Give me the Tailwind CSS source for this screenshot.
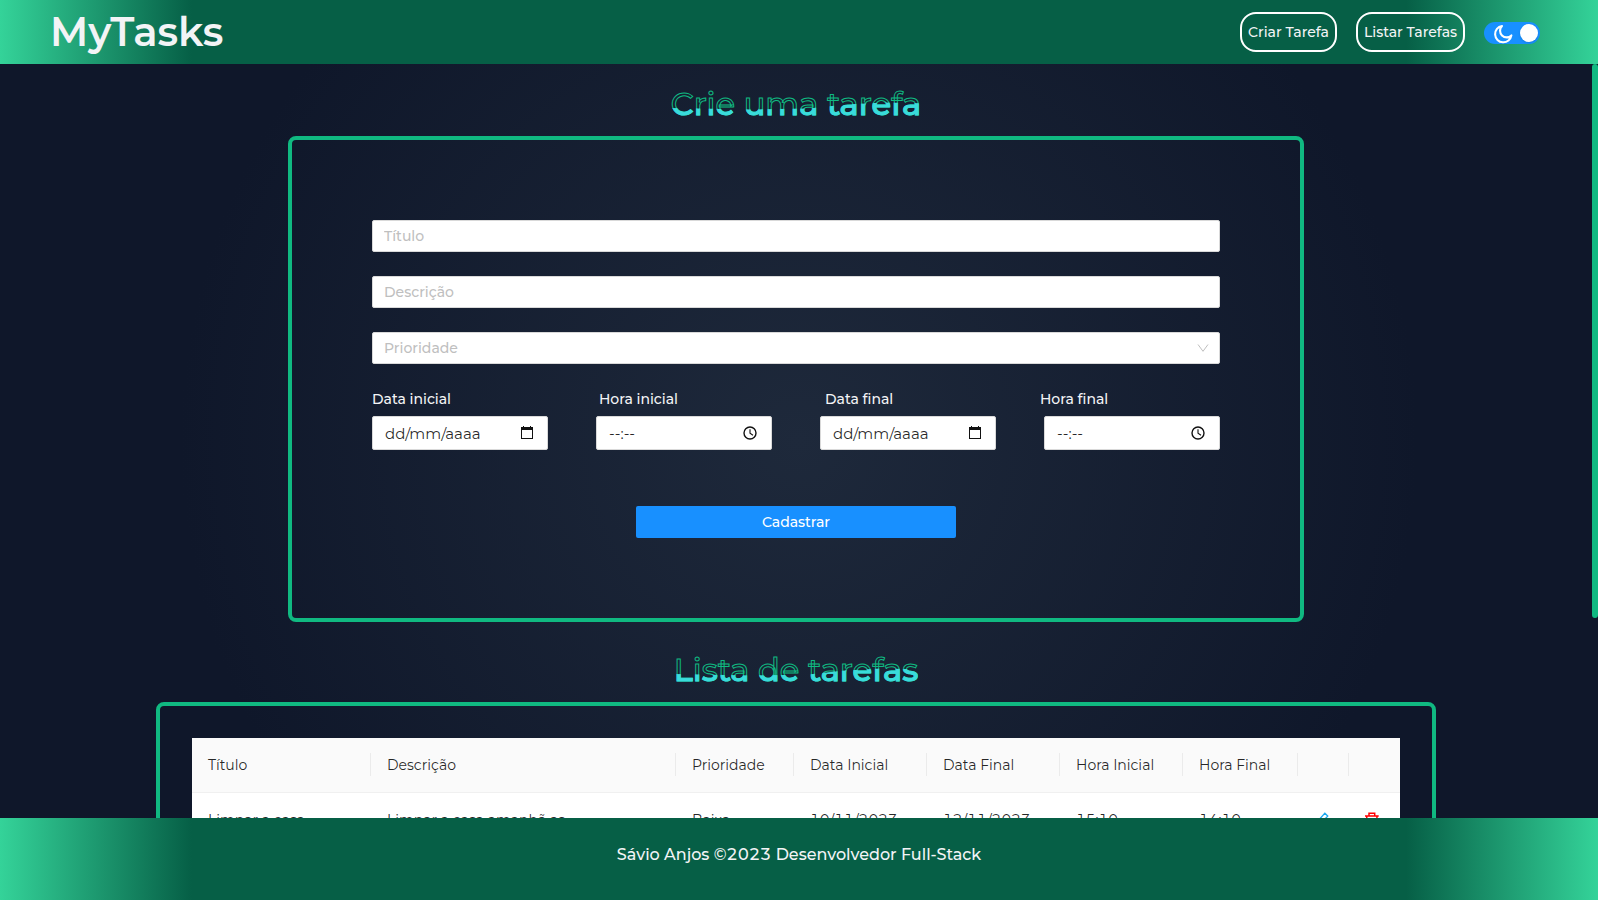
<!DOCTYPE html>
<html lang="pt-BR">
<head>
<meta charset="utf-8">
<meta name="viewport" content="width=device-width, initial-scale=1">
<title>MyTasks</title>
<script src="https://cdn.jsdelivr.net/npm/@tailwindcss/browser@4"></script>
</head>
<body class="flex h-screen flex-col overflow-hidden bg-[#0f172a] font-[Montserrat,Inter,sans-serif] text-sm tabular-nums text-black/85">
<header class="flex h-16 shrink-0 items-center justify-between bg-[linear-gradient(90deg,#34d399_0%,#065f46_12%,#065f46_88%,#34d399_100%)] pr-[58px] pl-[50px]">
  <h1 class="text-[40px] leading-none font-semibold text-gray-100">MyTasks</h1>
  <nav class="flex items-center gap-[19px]">
    <button type="button" class="h-10 w-[97px] rounded-2xl border-2 border-white font-medium whitespace-nowrap text-gray-100">Criar Tarefa</button>
    <button type="button" class="h-10 w-[109px] rounded-2xl border-2 border-white font-medium whitespace-nowrap text-gray-100">Listar Tarefas</button>
    <button type="button" role="switch" aria-checked="true" aria-label="Modo escuro" class="mt-0.5 flex h-[22px] w-14 items-center justify-between rounded-full bg-[#1890ff] pr-0.5 pl-[9px]">
      <svg class="mt-0.5 size-5" viewBox="0 0 20 20" fill="none" stroke="#fff" stroke-width="2.1" stroke-linejoin="round" aria-hidden="true"><path d="M9 2A8.2 8.2 0 1 0 18.4 11.4A5.6 5.6 0 0 1 9 2Z"/></svg>
      <span class="size-[18px] rounded-full bg-white shadow"></span>
    </button>
  </nav>
</header>

<div class="relative min-h-0 flex-1">
<main class="h-full overflow-y-auto bg-[radial-gradient(circle,#1e293b_0%,#0f172a_70%)] pt-5 pr-1.5 [scrollbar-width:none]">
  <section class="mx-auto max-w-[1016px]">
    <h2 class="relative mx-auto mb-3 w-fit text-[32px] leading-10 font-medium text-transparent [-webkit-text-stroke:1px_#10b981] before:absolute before:inset-0 before:whitespace-nowrap before:text-[#3adbdb] before:content-['Crie_uma_tarefa'] before:[-webkit-text-stroke:1px_#3adbdb] before:[clip-path:polygon(0_60%,32%_64%,55%_61%,70%_51%,85%_46%,100%_48%,100%_100%,0_100%)]">Crie uma tarefa</h2>
    <form class="rounded-lg border-4 border-[#10b981] p-20">
      <div class="flex flex-col gap-6">
        <input type="text" aria-label="Título" placeholder="Título" class="h-8 w-full rounded-xs border border-[#d9d9d9] bg-white px-[11px] font-medium placeholder:text-[#bfbfbf]">
        <input type="text" aria-label="Descrição" placeholder="Descrição" class="h-8 w-full rounded-xs border border-[#d9d9d9] bg-white px-[11px] font-medium placeholder:text-[#bfbfbf]">
        <div class="relative">
          <select aria-label="Prioridade" class="block h-8 w-full appearance-none rounded-xs border border-[#d9d9d9] bg-white px-[11px] font-medium text-[#bfbfbf]"><option>Prioridade</option><option>Baixa</option><option>Média</option><option>Alta</option></select>
          <svg class="pointer-events-none absolute top-2.5 right-[11px] size-3" viewBox="0 0 12 12" fill="none" stroke="#bfbfbf" aria-hidden="true"><path d="M1 2.5L6 9.3L11 2.5"/></svg>
        </div>
      </div>
      <div class="mt-6 grid grid-cols-[227fr_226fr_215fr_180fr] leading-[22px] font-medium text-gray-100">
        <label for="di">Data inicial</label><label for="hi">Hora inicial</label><label for="df">Data final</label><label for="hf">Hora final</label>
      </div>
      <div class="mt-1.5 grid grid-cols-4 gap-12">
        <div class="relative">
          <input id="di" type="text" value="dd/mm/aaaa" class="h-[34px] w-full rounded-xs border border-[#d9d9d9] bg-white px-3 text-[15px]">
          <svg class="absolute top-2.5 right-[15px] h-3.5 w-3" viewBox="0 0 12 14" aria-hidden="true"><path fill="#111" fill-rule="evenodd" d="M0 1h2V0h1v1h6V0h1v1h2v12H0zM1 4v8h10V4z"/></svg>
        </div>
        <div class="relative">
          <input id="hi" type="text" value="--:--" class="h-[34px] w-full rounded-xs border border-[#d9d9d9] bg-white px-3 text-[15px]">
          <svg class="absolute top-2.5 right-[15px] size-3.5" viewBox="0 0 14 14" fill="none" stroke="#111" stroke-width="1.4" aria-hidden="true"><circle cx="7" cy="7" r="6"/><path d="M7 3.2V7.3L10 9.2" stroke-width="1.1"/></svg>
        </div>
        <div class="relative">
          <input id="df" type="text" value="dd/mm/aaaa" class="h-[34px] w-full rounded-xs border border-[#d9d9d9] bg-white px-3 text-[15px]">
          <svg class="absolute top-2.5 right-[15px] h-3.5 w-3" viewBox="0 0 12 14" aria-hidden="true"><path fill="#111" fill-rule="evenodd" d="M0 1h2V0h1v1h6V0h1v1h2v12H0zM1 4v8h10V4z"/></svg>
        </div>
        <div class="relative">
          <input id="hf" type="text" value="--:--" class="h-[34px] w-full rounded-xs border border-[#d9d9d9] bg-white px-3 text-[15px]">
          <svg class="absolute top-2.5 right-[15px] size-3.5" viewBox="0 0 14 14" fill="none" stroke="#111" stroke-width="1.4" aria-hidden="true"><circle cx="7" cy="7" r="6"/><path d="M7 3.2V7.3L10 9.2" stroke-width="1.1"/></svg>
        </div>
      </div>
      <button type="submit" class="mx-auto mt-14 block h-8 w-80 rounded-xs bg-[#1890ff] font-medium text-white">Cadastrar</button>
    </form>
  </section>

  <section class="mx-auto mt-7 max-w-[1280px]">
    <h2 class="relative mx-auto mb-3 w-fit text-[32px] leading-10 font-medium text-transparent [-webkit-text-stroke:1px_#10b981] before:absolute before:inset-0 before:whitespace-nowrap before:text-[#3adbdb] before:content-['Lista_de_tarefas'] before:[-webkit-text-stroke:1px_#3adbdb] before:[clip-path:polygon(0_60%,32%_64%,55%_61%,70%_51%,85%_46%,100%_48%,100%_100%,0_100%)]">Lista de tarefas</h2>
    <div class="rounded-lg border-4 border-[#10b981] p-8">
      <table class="w-full table-fixed rounded-t-xs bg-white text-left">
        <colgroup><col class="w-[179px]"><col class="w-[305px]"><col class="w-[118px]"><col class="w-[133px]"><col class="w-[133px]"><col class="w-[123px]"><col class="w-[115px]"><col class="w-[51px]"><col class="w-[51px]"></colgroup>
        <thead class="bg-[#fafafa]">
          <tr class="h-[54px] border-b border-[#f0f0f0] [&>th]:bg-[linear-gradient(#ebebeb,#ebebeb)] [&>th]:bg-[length:1px_23px] [&>th]:bg-right [&>th]:bg-no-repeat [&>th]:px-4 [&>th]:font-normal [&>th:last-child]:bg-none">
            <th scope="col">Título</th><th scope="col">Descrição</th><th scope="col">Prioridade</th><th scope="col">Data Inicial</th><th scope="col">Data Final</th><th scope="col">Hora Inicial</th><th scope="col">Hora Final</th><th></th><th></th>
          </tr>
        </thead>
        <tbody>
          <tr class="h-14 border-b border-[#f0f0f0] [&>td]:px-4">
            <td>Limpar a casa</td><td>Limpar a casa amanhã as</td><td>Baixa</td><td>10/11/2023</td><td>12/11/2023</td><td>15:10</td><td>14:10</td>
            <td><button type="button" aria-label="Editar" class="block"><svg class="size-4" viewBox="0 0 14 14" fill="none" stroke="#1ba8f0" stroke-width="1.2" aria-hidden="true"><path d="M2 9.5L9.5 1L12 3.5L4.5 12L1.5 12.5Z"/></svg></button></td>
            <td><button type="button" aria-label="Excluir" class="block"><svg class="size-4" viewBox="1 0 14 14" fill="none" stroke="#f00" stroke-width="1.3" aria-hidden="true"><path d="M4.5 3V1H9.5V3M1 3.6H13M2.5 4L3 13H11L11.5 4"/></svg></button></td>
          </tr>
        </tbody>
      </table>
    </div>
  </section>
</main>
<div class="absolute top-0 right-0 h-[554px] w-1.5 rounded-full bg-[#10b981]" aria-hidden="true"></div>
</div>

<footer class="h-[82px] shrink-0 bg-[linear-gradient(90deg,#34d399_0%,#065f46_12%,#065f46_88%,#34d399_100%)] pt-[25px] text-center text-base font-medium text-gray-100">Sávio Anjos ©2023 Desenvolvedor Full-Stack</footer>
</body>
</html>
